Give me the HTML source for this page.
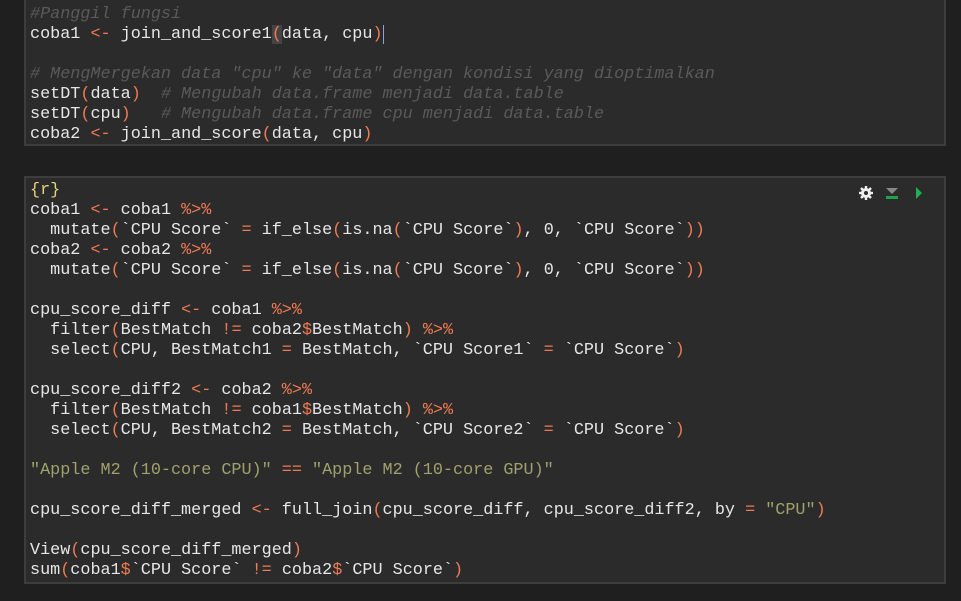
<!DOCTYPE html>
<html><head><style>
body{margin:0;width:961px;height:601px;background:#1f1f1f;overflow:hidden;position:relative;font-family:"Liberation Mono",monospace;}
.chunk{position:absolute;left:24px;width:922px;background:#2b2b2b;border:2px solid #3d3d3d;box-sizing:border-box;}
pre{margin:0;font-family:"Liberation Mono",monospace;font-size:16.8px;line-height:20px;color:#e6e6e6;position:absolute;left:4px;}
.o{color:#f07a52}.c{color:#5a5a5a;font-style:italic}.s{color:#9ea26b}.y{color:#e8d27a}
</style></head><body>
<div class="chunk" style="top:-4px;height:150px;border-top:none">
<pre style="top:9px"><span class="c">#Panggil fungsi</span>
coba1 <span class="o">&lt;-</span> join_and_score1<span class="o" style="background:#444">(</span>data, cpu<span class="o">)</span><span style="border-left:1px solid #8aa0e0"></span>

<span class="c"># MengMergekan data "cpu" ke "data" dengan kondisi yang dioptimalkan</span>
setDT<span class="o">(</span>data<span class="o">)</span>  <span class="c"># Mengubah data.frame menjadi data.table</span>
setDT<span class="o">(</span>cpu<span class="o">)</span>   <span class="c"># Mengubah data.frame cpu menjadi data.table</span>
coba2 <span class="o">&lt;-</span> join_and_score<span class="o">(</span>data, cpu<span class="o">)</span></pre>
</div>
<div class="chunk" style="top:176px;height:408px">
<pre style="top:3px"><span class="y">{r}</span>
coba1 <span class="o">&lt;-</span> coba1 <span class="o">%&gt;%</span>
  mutate<span class="o">(</span>`CPU Score` <span class="o">=</span> if_else<span class="o">(</span>is.na<span class="o">(</span>`CPU Score`<span class="o">)</span>, 0, `CPU Score`<span class="o">))</span>
coba2 <span class="o">&lt;-</span> coba2 <span class="o">%&gt;%</span>
  mutate<span class="o">(</span>`CPU Score` <span class="o">=</span> if_else<span class="o">(</span>is.na<span class="o">(</span>`CPU Score`<span class="o">)</span>, 0, `CPU Score`<span class="o">))</span>

cpu_score_diff <span class="o">&lt;-</span> coba1 <span class="o">%&gt;%</span>
  filter<span class="o">(</span>BestMatch <span class="o">!=</span> coba2<span class="o">$</span>BestMatch<span class="o">)</span> <span class="o">%&gt;%</span>
  select<span class="o">(</span>CPU, BestMatch1 <span class="o">=</span> BestMatch, `CPU Score1` <span class="o">=</span> `CPU Score`<span class="o">)</span>

cpu_score_diff2 <span class="o">&lt;-</span> coba2 <span class="o">%&gt;%</span>
  filter<span class="o">(</span>BestMatch <span class="o">!=</span> coba1<span class="o">$</span>BestMatch<span class="o">)</span> <span class="o">%&gt;%</span>
  select<span class="o">(</span>CPU, BestMatch2 <span class="o">=</span> BestMatch, `CPU Score2` <span class="o">=</span> `CPU Score`<span class="o">)</span>

<span class="s">"Apple M2 (10-core CPU)"</span> <span class="o">==</span> <span class="s">"Apple M2 (10-core GPU)"</span>

cpu_score_diff_merged <span class="o">&lt;-</span> full_join<span class="o">(</span>cpu_score_diff, cpu_score_diff2, by <span class="o">=</span> <span class="s">"CPU"</span><span class="o">)</span>

View<span class="o">(</span>cpu_score_diff_merged<span class="o">)</span>
sum<span class="o">(</span>coba1<span class="o">$</span>`CPU Score` <span class="o">!=</span> coba2<span class="o">$</span>`CPU Score`<span class="o">)</span></pre>
</div>
<svg style="position:absolute;left:856px;top:184px" width="72" height="18" viewBox="0 0 72 18">
<g fill="#eee"><circle cx="10" cy="9" r="5"/>
<g stroke="#eee" stroke-width="2.4"><line x1="10" y1="2" x2="10" y2="16"/><line x1="3" y1="9" x2="17" y2="9"/><line x1="5" y1="4" x2="15" y2="14"/><line x1="15" y1="4" x2="5" y2="14"/></g>
<circle cx="10" cy="9" r="2" fill="#2b2b2b"/></g>
<polygon points="30,4 42,4 36,10" fill="#888"/>
<rect x="30" y="12" width="12" height="3" fill="#1fa34a"/>
<polygon points="60,3 66,9 60,15" fill="#1fb050"/>
</svg>
</body></html>
